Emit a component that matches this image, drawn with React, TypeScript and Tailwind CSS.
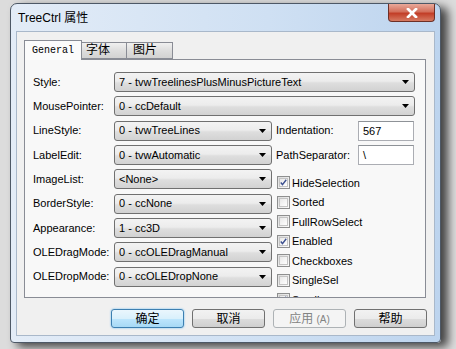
import React from 'react'

const ui = { fontFamily: '"Liberation Sans", "Noto Sans CJK SC", sans-serif' }

const Arrow = () => (
  <svg width="7" height="4" viewBox="0 0 7 4" className="shrink-0">
    <path d="M0 0h7L3.5 4z" fill="#000" />
  </svg>
)

const Combo = ({ value, wide }: { value: string; wide?: boolean }) => (
  <div
    className={
      'flex items-center h-[20px] rounded-[3px] border border-[#707070] pl-[4px] pr-[5px] bg-[linear-gradient(#f3f3f3,#ececec_45%,#dedede_55%,#d2d2d2)] ' +
      (wide ? 'w-[301px]' : 'w-[158px]')
    }
  >
    <span className="flex-1 text-[11px] text-black whitespace-nowrap overflow-hidden">{value}</span>
    <Arrow />
  </div>
)

const Row = ({ label, value, wide }: { label: string; value: string; wide?: boolean }) => (
  <div className="flex items-center h-[24.3px]">
    <span className="w-[81px] text-[11px] text-black">{label}</span>
    <Combo value={value} wide={wide} />
  </div>
)

const TextRow = ({ label, value }: { label: string; value: string }) => (
  <div className="flex items-center h-[24.3px]">
    <span className="w-[82px] text-[11px] text-black">{label}</span>
    <div className="w-[56px] h-[20px] bg-white border border-[#abadb3] border-t-[#8e9297] pl-[4px] text-[11px] leading-[18px]">
      {value}
    </div>
  </div>
)

const Check = ({ label, checked }: { label: string; checked?: boolean }) => (
  <div className="flex items-center h-[19.5px] shrink-0">
    <div className="w-[13px] h-[13px] ml-[1px] border border-[#8e8f8f] bg-[linear-gradient(135deg,#dcdcdc,#fbfbfb)] p-[1px]">
      <div className="w-full h-full border border-[#c4c4c4] bg-[linear-gradient(135deg,#e8e8e8,#ffffff)] flex items-center justify-center">
        {checked && (
          <svg width="9" height="9" viewBox="0 0 9 9">
            <path d="M1 4.5l2.2 2.8L8 1" stroke="#3b4f8f" strokeWidth="1.8" fill="none" />
          </svg>
        )}
      </div>
    </div>
    <span className="ml-[2px] text-[11px] text-black">{label}</span>
  </div>
)

const Btn = ({ label, primary, disabled }: { label: React.ReactNode; primary?: boolean; disabled?: boolean }) => (
  <div
    className={
      'w-[73px] h-[19px] rounded-[3px] border flex items-center justify-center text-[12px] ' +
      (primary
        ? 'border-[#3c7fb1] bg-[linear-gradient(#eaf6fd,#d9f0fc_50%,#bee6fd_50%,#a7d9f5)] shadow-[0_0_2px_#5db5f0] text-black'
        : disabled
          ? 'border-[#adb2b5] bg-[#f4f4f4] text-[#838383]'
          : 'border-[#707070] bg-[linear-gradient(#f2f2f2,#ebebeb_50%,#dddddd_50%,#cfcfcf)] text-black')
    }
  >
    {label}
  </div>
)

export default function App() {
  return (
    <div className="w-[456px] h-[349px] bg-[#dcdcdc] pl-[10px] pt-[3px] overflow-hidden" style={ui}>
      <div className="w-[431px] h-[340px] rounded-t-[7px] rounded-b-[4px] border border-[#4d5866] bg-[linear-gradient(90deg,#e3ecf7,#cfe0f3_60%,#bdd4ee)] shadow-[7px_4px_10px_rgba(0,0,0,0.7)] flex flex-col">
        {/* title bar */}
        <div className="h-[27px] flex items-start">
          <span className="pl-[7px] pt-[5px] text-[12px] text-black flex-1">TreeCtrl 属性</span>
          <div className="mr-[5px] w-[47px] h-[18px] rounded-b-[4px] border border-t-0 border-[#6d2f26] bg-[linear-gradient(#e9a99a,#d3705c_45%,#c23e28_55%,#d67a62)] flex items-center justify-center">
            <svg width="12" height="10" viewBox="0 0 12 10">
              <path d="M2 1l8 8M10 1L2 9" stroke="#fff" strokeWidth="2.6" strokeLinecap="square" />
              <path d="M2 1l8 8M10 1L2 9" stroke="#fff" strokeWidth="2" />
            </svg>
          </div>
        </div>

        {/* client */}
        <div className="mx-[5px] h-[305px] bg-[#f0f0f0] border border-[#a9b8ca] pl-[7px] pt-[7px]">
          {/* tabs */}
          <div className="flex items-end h-[20px]">
            <div
              className="w-[58px] h-[20px] bg-[#fbfbfb] border border-b-0 border-[#898c95] flex items-center justify-center text-[10px] relative z-10 -mb-[1px]"
              style={{ fontFamily: '"Liberation Mono", monospace' }}
            >
              General
            </div>
            <div className="w-[45px] h-[17px] border border-l-0 border-[#898c95] bg-[linear-gradient(#f0f0f0,#dedede_50%,#d2d2d2)] pl-[4px] text-[12px] leading-[15px]">
              字体
            </div>
            <div className="w-[46px] h-[17px] border border-l-0 border-[#898c95] bg-[linear-gradient(#f0f0f0,#dedede_50%,#d2d2d2)] pl-[6px] text-[12px] leading-[15px]">
              图片
            </div>
          </div>

          {/* panel */}
          <div className="w-[402px] h-[239px] border border-[#898c95] bg-[#f8f8f8] pl-[8px] pt-[10px] overflow-hidden">
            <Row label="Style:" value="7 - tvwTreelinesPlusMinusPictureText" wide />
            <Row label="MousePointer:" value="0 - ccDefault" wide />
            <div className="flex gap-[4px]">
              <div className="flex flex-col">
                <Row label="LineStyle:" value="0 - tvwTreeLines" />
                <Row label="LabelEdit:" value="0 - tvwAutomatic" />
                <Row label="ImageList:" value="<None>" />
                <Row label="BorderStyle:" value="0 - ccNone" />
                <Row label="Appearance:" value="1 - cc3D" />
                <Row label="OLEDragMode:" value="0 - ccOLEDragManual" />
                <Row label="OLEDropMode:" value="0 - ccOLEDropNone" />
              </div>
              <div className="flex flex-col">
                <TextRow label="Indentation:" value="567" />
                <TextRow label="PathSeparator:" value="\" />
                <div className="mt-[6px] flex flex-col">
                  <Check label="HideSelection" checked />
                  <Check label="Sorted" />
                  <Check label="FullRowSelect" />
                  <Check label="Enabled" checked />
                  <Check label="Checkboxes" />
                  <Check label="SingleSel" />
                  <Check label="Scroll" checked />
                </div>
              </div>
            </div>
          </div>

          {/* buttons */}
          <div className="flex gap-[8px] pl-[87px] mt-[11px]">
            <Btn label="确定" primary />
            <Btn label="取消" />
            <Btn
              label={
                <span>
                  应用 <span className="text-[10px]">(A)</span>
                </span>
              }
              disabled
            />
            <Btn label="帮助" />
          </div>
        </div>
      </div>
    </div>
  )
}
